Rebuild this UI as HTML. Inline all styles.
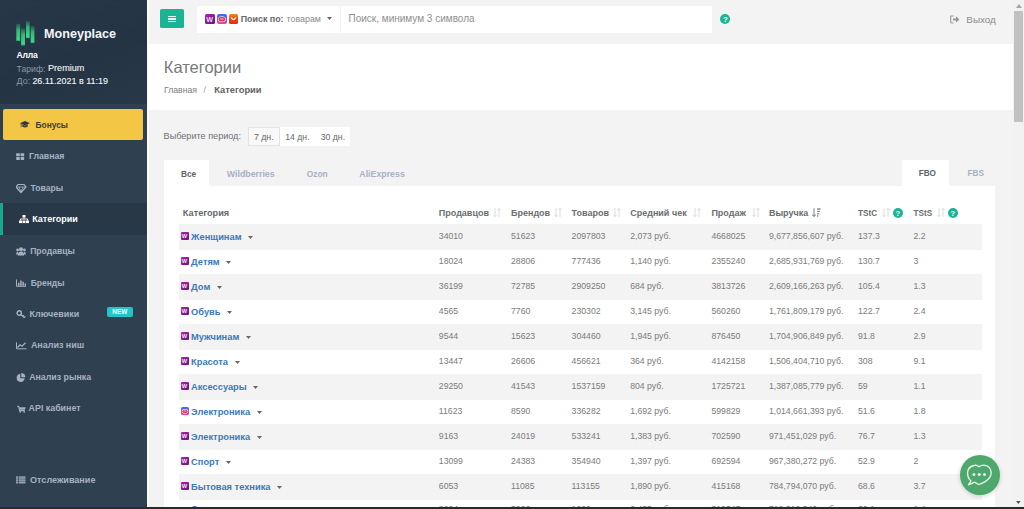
<!DOCTYPE html>
<html><head><meta charset="utf-8"><title>Категории</title>
<style>
html,body{margin:0;padding:0}
body{width:1024px;height:509px;overflow:hidden;position:relative;background:#f3f3f4;font-family:"Liberation Sans",sans-serif}
.wrap{position:absolute;left:0;top:0;width:1024px;height:509px;filter:none}
.t{position:absolute;white-space:nowrap}
.r{position:absolute}
svg.r{display:block}
</style></head><body><div class="wrap">
<div class="r" style="left:0px;top:0px;width:147px;height:509px;background:#2f4050"></div>
<div class="r" style="left:0px;top:0px;width:147px;height:104px;background:linear-gradient(160deg,#283747 0%,#253444 55%,#283849 100%)"></div>
<div class="r" style="left:147px;top:0px;width:1.5px;height:509px;background:#fafafa"></div>
<div class="r" style="left:148px;top:44px;width:865px;height:66px;background:#ffffff"></div>
<svg class="r" style="left:15px;top:20px" width="22" height="27" viewBox="0 0 22 27">
<defs><linearGradient id="lg" x1="0" y1="0" x2="0" y2="1"><stop offset="0" stop-color="#2a8a66" stop-opacity=".45"/><stop offset=".35" stop-color="#36c47e" stop-opacity=".9"/><stop offset=".9" stop-color="#3fd488"/><stop offset="1" stop-color="#2aa56a"/></linearGradient></defs>
<rect x="1.3" y="3.8" width="3.8" height="17.2" fill="url(#lg)"/>
<rect x="6.1" y="8.5" width="3.9" height="17" fill="url(#lg)"/>
<rect x="11" y="1.2" width="3.7" height="17" fill="url(#lg)"/>
<rect x="15.7" y="6.1" width="3.7" height="17" fill="url(#lg)"/>
</svg>
<div class="t" style="left:44px;top:28.13px;font-size:12.6px;line-height:12.6px;color:#f4f6f8;font-weight:700;">Moneyplace</div>
<div class="t" style="left:16.6px;top:51.32px;font-size:8.6px;line-height:8.6px;color:#ffffff;font-weight:700;letter-spacing:-0.2px">Алла</div>
<div class="t" style="left:16.6px;top:64.58px;font-size:8.65px;line-height:8.65px;color:#8a96a5;font-weight:400;">Тариф:</div>
<div class="t" style="left:48px;top:64.20px;font-size:9.1px;line-height:9.1px;color:#f4f6f8;font-weight:400;-webkit-text-stroke:0.1px #f4f6f8">Premium</div>
<div class="t" style="left:16.6px;top:76.87px;font-size:8.9px;line-height:8.9px;color:#8a96a5;font-weight:400;">До:</div>
<div class="t" style="left:32.4px;top:76.82px;font-size:8.95px;line-height:8.95px;color:#f4f6f8;font-weight:400;-webkit-text-stroke:0.1px #f4f6f8">26.11.2021 в 11:19</div>
<div class="r" style="left:3px;top:109px;width:140px;height:31px;background:#f3c646;border-radius:2px"></div>
<svg class="r" style="left:20.3px;top:121.3px" width="10" height="7.2" viewBox="0 0 10 7.2"><path d="M5 0 L10 2.2 L5 4.2 L0 2.2Z" fill="#2c3650"/><path d="M2.2 3.3 V5.6 Q5 7.6 7.8 5.6 V3.3 L5 4.6Z" fill="#4a4232"/><rect x="0.7" y="2.2" width="0.8" height="4" fill="#5a4c2c"/></svg>
<div class="t" style="left:35.5px;top:121.09px;font-size:8.4px;line-height:8.4px;color:#3d3d33;font-weight:700;">Бонусы</div>
<div class="r" style="left:0px;top:202.5px;width:147px;height:32px;background:#293846"></div>
<div class="r" style="left:0px;top:202.5px;width:3px;height:32px;background:#19aa8d"></div>
<div class="t" style="left:28.9px;top:152.39px;font-size:8.75px;line-height:8.75px;color:#a7b1c2;font-weight:700;">Главная</div>
<svg class="r" style="left:16.4px;top:152.5px;color:#a7b1c2;fill:#a7b1c2" width="11" height="10" viewBox="0 0 11 10"><rect x="0.2" y="0.2" width="3.6" height="3" rx=".4"/><rect x="4.6" y="0.2" width="3.6" height="3" rx=".4"/><rect x="0.2" y="4" width="3.6" height="3" rx=".4"/><rect x="4.6" y="4" width="3.6" height="3" rx=".4"/></svg>
<div class="t" style="left:30.5px;top:183.72px;font-size:8.6px;line-height:8.6px;color:#a7b1c2;font-weight:700;">Товары</div>
<svg class="r" style="left:16.4px;top:183.7px;color:#a7b1c2;fill:#a7b1c2" width="11" height="10" viewBox="0 0 11 10"><path d="M2 0.5 H8 L10 3 L5 8.5 L0 3Z" fill="none" stroke="currentColor" stroke-width="1.2"/><path d="M0 3 H10 M3 3 L5 8 L7 3" fill="none" stroke="currentColor" stroke-width=".8"/></svg>
<div class="t" style="left:32.2px;top:214.98px;font-size:9.0px;line-height:9.0px;color:#ffffff;font-weight:700;">Категории</div>
<svg class="r" style="left:19px;top:215.3px;color:#ffffff;fill:#ffffff" width="11" height="10" viewBox="0 0 11 10"><rect x="3.5" y="0" width="3" height="2.6"/><rect x="0" y="5.5" width="3" height="2.6"/><rect x="3.5" y="5.5" width="3" height="2.6"/><rect x="7" y="5.5" width="3" height="2.6"/><path d="M5 2.6 V4 M1.5 5.5 V4 H8.5 V5.5" stroke="currentColor" stroke-width=".9" fill="none"/></svg>
<div class="t" style="left:30.2px;top:247.02px;font-size:8.6px;line-height:8.6px;color:#a7b1c2;font-weight:700;">Продавцы</div>
<svg class="r" style="left:16.4px;top:247.0px;color:#a7b1c2;fill:#a7b1c2" width="11" height="10" viewBox="0 0 11 10"><circle cx="5" cy="2.3" r="2"/><path d="M1.8 8.5 Q1.8 4.6 5 4.6 Q8.2 4.6 8.2 8.5Z"/><circle cx="1.6" cy="3" r="1.4"/><circle cx="8.4" cy="3" r="1.4"/><path d="M0 7.5 Q0 4.8 1.8 4.8 L2.3 7.5Z M10 7.5 Q10 4.8 8.2 4.8 L7.7 7.5Z"/></svg>
<div class="t" style="left:30.7px;top:278.70px;font-size:8.5px;line-height:8.5px;color:#a7b1c2;font-weight:700;">Бренды</div>
<svg class="r" style="left:16.4px;top:278.6px;color:#a7b1c2;fill:#a7b1c2" width="11" height="10" viewBox="0 0 11 10"><path d="M0.5 0.5 V7.3 H10" stroke="currentColor" stroke-width="1" fill="none"/><rect x="2" y="3.8" width="1.5" height="3"/><rect x="4.2" y="1.5" width="1.5" height="5.3"/><rect x="6.4" y="2.8" width="1.5" height="4"/><rect x="8.6" y="4.5" width="1.4" height="2.3"/></svg>
<div class="t" style="left:29.6px;top:309.62px;font-size:8.95px;line-height:8.95px;color:#a7b1c2;font-weight:700;">Ключевики</div>
<svg class="r" style="left:16.4px;top:309.9px;color:#a7b1c2;fill:#a7b1c2" width="11" height="10" viewBox="0 0 11 10"><circle cx="3.2" cy="3" r="2.2" fill="none" stroke="currentColor" stroke-width="1.4"/><path d="M4.8 4.6 L8.2 7.6 M6.8 6.4 L8 5.2 M8.2 7.6 L9.4 6.4" stroke="currentColor" stroke-width="1.3" fill="none"/></svg>
<div class="t" style="left:30.9px;top:341.22px;font-size:8.95px;line-height:8.95px;color:#a7b1c2;font-weight:700;">Анализ ниш</div>
<svg class="r" style="left:16.4px;top:341.5px;color:#a7b1c2;fill:#a7b1c2" width="11" height="10" viewBox="0 0 11 10"><path d="M0.5 0.3 V6.8 H10.5" stroke="currentColor" stroke-width="1" fill="none"/><path d="M1.5 5.5 L4 2.8 L6 4.2 L9.5 0.8" stroke="currentColor" stroke-width="1.2" fill="none"/></svg>
<div class="t" style="left:29.2px;top:372.65px;font-size:8.8px;line-height:8.8px;color:#a7b1c2;font-weight:700;">Анализ рынка</div>
<svg class="r" style="left:16.4px;top:372.8px;color:#a7b1c2;fill:#a7b1c2" width="11" height="10" viewBox="0 0 11 10"><path d="M4.3 1 A4 4 0 1 0 8.6 5.3 H4.3Z"/><path d="M5.3 0 A4 4 0 0 1 9.3 4.2 H5.3Z"/></svg>
<div class="t" style="left:28.6px;top:404.01px;font-size:8.85px;line-height:8.85px;color:#a7b1c2;font-weight:700;">API кабинет</div>
<svg class="r" style="left:16.4px;top:404.2px;color:#a7b1c2;fill:#a7b1c2" width="11" height="10" viewBox="0 0 11 10"><path d="M1 2.2 H2.6 L3.6 6.6 H8.8" stroke="currentColor" stroke-width="1.1" fill="none"/><path d="M3 3.2 H9.6 L9 5.8 H3.6Z"/><circle cx="4.2" cy="7.9" r=".8"/><circle cx="8.2" cy="7.9" r=".8"/></svg>
<div class="t" style="left:30px;top:475.74px;font-size:9.05px;line-height:9.05px;color:#a7b1c2;font-weight:700;">Отслеживание</div>
<svg class="r" style="left:16.4px;top:476.1px;color:#a7b1c2;fill:#a7b1c2" width="11" height="10" viewBox="0 0 11 10"><rect x="0" y="0.4" width="2" height="1.3"/><rect x="0" y="2.3" width="2" height="1.3"/><rect x="0" y="4.2" width="2" height="1.3"/><rect x="0" y="6.1" width="2" height="1.3"/><rect x="2.7" y="0.4" width="6.8" height="1.3"/><rect x="2.7" y="2.3" width="6.8" height="1.3"/><rect x="2.7" y="4.2" width="6.8" height="1.3"/><rect x="2.7" y="6.1" width="6.8" height="1.3"/></svg>
<div class="r" style="left:107px;top:306.9px;width:26.3px;height:10.4px;background:#23c6c8;border-radius:2px"></div>
<div class="t" style="left:112.3px;top:309.38px;font-size:6.4px;line-height:6.4px;color:#f2fbfb;font-weight:700;">NEW</div>
<div class="r" style="left:160px;top:9px;width:24px;height:19px;background:#1ab394;border-radius:1.5px"></div>
<div class="r" style="left:168px;top:16px;width:8px;height:1.4px;background:#e8f7f3"></div>
<div class="r" style="left:168px;top:18.4px;width:8px;height:1.4px;background:#e8f7f3"></div>
<div class="r" style="left:168px;top:20.8px;width:8px;height:1.4px;background:#e8f7f3"></div>
<div class="r" style="left:197px;top:6px;width:515px;height:27px;background:#ffffff"></div>
<div class="r" style="left:339.5px;top:6px;width:1px;height:27px;background:#f3f3f3"></div>
<div class="r" style="left:205px;top:14px;width:10px;height:10px;border-radius:1.5px;background:linear-gradient(135deg,#b41fa8,#5d1a86)"></div>
<div class="t" style="left:206.3px;top:15.71px;font-size:7.2px;line-height:7.2px;color:#f0d5f0;font-weight:700;letter-spacing:-0.4px">W</div>
<div class="r" style="left:217px;top:14px;width:9.5px;height:10px;border-radius:2px;background:linear-gradient(180deg,#3f6af5 0%,#6a5fe0 45%,#f2457e 100%)"></div>
<svg class="r" style="left:217px;top:14px" width="10" height="10" viewBox="0 0 10 10"><ellipse cx="4.9" cy="5.2" rx="3.9" ry="3" fill="#fff"/><ellipse cx="4.9" cy="5.2" rx="3.3" ry="2.4" fill="#ef2e62"/><ellipse cx="4.9" cy="4.8" rx="2" ry=".9" fill="#ff8fae"/></svg>
<div class="r" style="left:229px;top:14px;width:9px;height:9.6px;border-radius:1.5px;background:linear-gradient(180deg,#f58a1f 0%,#ea4a10 45%,#e2300c 100%)"></div>
<svg class="r" style="left:229px;top:14px" width="9" height="10" viewBox="0 0 9 10"><path d="M2 3.5 Q4.5 7.5 7 3.5" stroke="#fff" stroke-width="1.3" fill="none"/></svg>
<div class="t" style="left:240.7px;top:15.07px;font-size:8.9px;line-height:8.9px;color:#66696b;font-weight:700;">Поиск по:</div>
<div class="t" style="left:286.5px;top:15.07px;font-size:8.9px;line-height:8.9px;color:#8a8a8a;font-weight:400;">товарам</div>
<svg class="r" style="left:326.5px;top:17px" width="5" height="3" viewBox="0 0 5 3"><path d="M0 0H5L2.5 3Z" fill="#666"/></svg>
<div class="t" style="left:348.5px;top:14.43px;font-size:10px;line-height:10px;color:#8f8f8f;font-weight:400;">Поиск, минимум 3 символа</div>
<div class="r" style="left:720px;top:14px;width:10px;height:10px;border-radius:50%;background:#1ab394"></div>
<div class="t" style="left:723px;top:15.53px;font-size:8px;line-height:8px;color:#ffffff;font-weight:700;">?</div>
<svg class="r" style="left:949.5px;top:15px" width="10" height="9" viewBox="0 0 10 9"><path d="M3.5 1 H1.5 Q0.7 1 0.7 1.8 V7.2 Q0.7 8 1.5 8 H3.5" stroke="#999" stroke-width="1.1" fill="none"/><path d="M3 3.4 H6 V1.3 L9.4 4.5 L6 7.7 V5.6 H3Z" fill="#999"/></svg>
<div class="t" style="left:966.3px;top:14.82px;font-size:9.9px;line-height:9.9px;color:#8c8c8c;font-weight:400;">Выход</div>
<div class="t" style="left:163.8px;top:58.73px;font-size:16.5px;line-height:16.5px;color:#78797b;font-weight:400;">Категории</div>
<div class="t" style="left:164px;top:85.74px;font-size:8.7px;line-height:8.7px;color:#7b7e80;font-weight:400;">Главная</div>
<div class="t" style="left:203.5px;top:85.74px;font-size:8.7px;line-height:8.7px;color:#999;font-weight:400;">/</div>
<div class="t" style="left:214.3px;top:86.33px;font-size:9.3px;line-height:9.3px;color:#5f6264;font-weight:700;">Категории</div>
<div class="t" style="left:163.6px;top:131.80px;font-size:9.1px;line-height:9.1px;color:#6f7274;font-weight:400;">Выберите период:</div>
<div class="r" style="left:248.3px;top:127.2px;width:31.4px;height:18.5px;background:#f9f9f9;box-shadow:inset 0 0 0 1px #e3e3e3"></div>
<div class="r" style="left:279.7px;top:127.4px;width:70px;height:18.2px;background:#ffffff"></div>
<div class="t" style="left:253.9px;top:132.75px;font-size:8.8px;line-height:8.8px;color:#686868;font-weight:400;">7 дн.</div>
<div class="t" style="left:285.2px;top:132.84px;font-size:8.7px;line-height:8.7px;color:#686868;font-weight:400;">14 дн.</div>
<div class="t" style="left:320.7px;top:132.84px;font-size:8.7px;line-height:8.7px;color:#686868;font-weight:400;">30 дн.</div>
<div class="r" style="left:163.6px;top:160px;width:45.7px;height:30px;background:#ffffff"></div>
<div class="t" style="left:181px;top:170.17px;font-size:8.3px;line-height:8.3px;color:#606367;font-weight:700;">Все</div>
<div class="t" style="left:226.8px;top:170.05px;font-size:8.8px;line-height:8.8px;color:#a7b1c2;font-weight:700;">Wildberries</div>
<div class="t" style="left:306.8px;top:170.39px;font-size:8.4px;line-height:8.4px;color:#a7b1c2;font-weight:700;">Ozon</div>
<div class="t" style="left:359.3px;top:170.05px;font-size:8.8px;line-height:8.8px;color:#a7b1c2;font-weight:700;">AliExpress</div>
<div class="r" style="left:902px;top:160px;width:47px;height:30px;background:#ffffff"></div>
<div class="t" style="left:918.7px;top:169.76px;font-size:8.2px;line-height:8.2px;color:#606367;font-weight:700;">FBO</div>
<div class="t" style="left:967.5px;top:169.76px;font-size:8.2px;line-height:8.2px;color:#a7b1c2;font-weight:700;">FBS</div>
<div class="r" style="left:163.8px;top:186px;width:831px;height:323px;background:#ffffff"></div>
<div class="t" style="left:182.8px;top:208.81px;font-size:9.2px;line-height:9.2px;color:#676a6c;font-weight:700;">Категория</div>
<div class="t" style="left:438.8px;top:208.98px;font-size:9.0px;line-height:9.0px;color:#6a6d6f;font-weight:700;">Продавцов</div>
<svg class="r" style="left:493.2px;top:208px" width="8" height="9" viewBox="0 0 8 9"><path d="M2 0 V8.5 M0.3 6.8 L2 8.7 L3.7 6.8" stroke="#dcdcdc" stroke-width="1" fill="none"/><path d="M6 9 V0.5 M4.3 2.2 L6 0.3 L7.7 2.2" stroke="#dcdcdc" stroke-width="1" fill="none"/></svg>
<div class="t" style="left:511px;top:208.98px;font-size:9.0px;line-height:9.0px;color:#6a6d6f;font-weight:700;">Брендов</div>
<svg class="r" style="left:554.1px;top:208px" width="8" height="9" viewBox="0 0 8 9"><path d="M2 0 V8.5 M0.3 6.8 L2 8.7 L3.7 6.8" stroke="#dcdcdc" stroke-width="1" fill="none"/><path d="M6 9 V0.5 M4.3 2.2 L6 0.3 L7.7 2.2" stroke="#dcdcdc" stroke-width="1" fill="none"/></svg>
<div class="t" style="left:571.6px;top:208.98px;font-size:9.0px;line-height:9.0px;color:#6a6d6f;font-weight:700;">Товаров</div>
<svg class="r" style="left:612.7px;top:208px" width="8" height="9" viewBox="0 0 8 9"><path d="M2 0 V8.5 M0.3 6.8 L2 8.7 L3.7 6.8" stroke="#dcdcdc" stroke-width="1" fill="none"/><path d="M6 9 V0.5 M4.3 2.2 L6 0.3 L7.7 2.2" stroke="#dcdcdc" stroke-width="1" fill="none"/></svg>
<div class="t" style="left:630.2px;top:208.98px;font-size:9.0px;line-height:9.0px;color:#6a6d6f;font-weight:700;">Средний чек</div>
<svg class="r" style="left:693.0px;top:208px" width="8" height="9" viewBox="0 0 8 9"><path d="M2 0 V8.5 M0.3 6.8 L2 8.7 L3.7 6.8" stroke="#dcdcdc" stroke-width="1" fill="none"/><path d="M6 9 V0.5 M4.3 2.2 L6 0.3 L7.7 2.2" stroke="#dcdcdc" stroke-width="1" fill="none"/></svg>
<div class="t" style="left:711.4px;top:208.98px;font-size:9.0px;line-height:9.0px;color:#6a6d6f;font-weight:700;">Продаж</div>
<svg class="r" style="left:751.6px;top:208px" width="8" height="9" viewBox="0 0 8 9"><path d="M2 0 V8.5 M0.3 6.8 L2 8.7 L3.7 6.8" stroke="#dcdcdc" stroke-width="1" fill="none"/><path d="M6 9 V0.5 M4.3 2.2 L6 0.3 L7.7 2.2" stroke="#dcdcdc" stroke-width="1" fill="none"/></svg>
<div class="t" style="left:768.9px;top:208.98px;font-size:9.0px;line-height:9.0px;color:#6a6d6f;font-weight:700;">Выручка</div>
<svg class="r" style="left:811.5px;top:207.8px" width="9" height="9" viewBox="0 0 9 9"><path d="M2 0.3 V8.3 M0.4 6.6 L2 8.5 L3.6 6.6" stroke="#909090" stroke-width="1.1" fill="none"/><path d="M5 1 H8.6 M5 3.4 H8 M5 5.8 H7.3 M5 8 H6.3" stroke="#8c8c8c" stroke-width="1.3" fill="none"/></svg>
<div class="t" style="left:858px;top:209.66px;font-size:8.2px;line-height:8.2px;color:#6a6d6f;font-weight:700;">TStC</div>
<svg class="r" style="left:881.5px;top:208px" width="8" height="9" viewBox="0 0 8 9"><path d="M2 0 V8.5 M0.3 6.8 L2 8.7 L3.7 6.8" stroke="#dcdcdc" stroke-width="1" fill="none"/><path d="M6 9 V0.5 M4.3 2.2 L6 0.3 L7.7 2.2" stroke="#dcdcdc" stroke-width="1" fill="none"/></svg>
<div class="r" style="left:892.5px;top:208px;width:10px;height:10px;border-radius:50%;background:#1ab394"></div>
<div class="t" style="left:895.4px;top:209.77px;font-size:7.6px;line-height:7.6px;color:#ffffff;font-weight:700;">?</div>
<div class="t" style="left:913.5px;top:209.66px;font-size:8.2px;line-height:8.2px;color:#6a6d6f;font-weight:700;">TStS</div>
<svg class="r" style="left:936.5px;top:208px" width="8" height="9" viewBox="0 0 8 9"><path d="M2 0 V8.5 M0.3 6.8 L2 8.7 L3.7 6.8" stroke="#dcdcdc" stroke-width="1" fill="none"/><path d="M6 9 V0.5 M4.3 2.2 L6 0.3 L7.7 2.2" stroke="#dcdcdc" stroke-width="1" fill="none"/></svg>
<div class="r" style="left:947.5px;top:208px;width:10px;height:10px;border-radius:50%;background:#1ab394"></div>
<div class="t" style="left:950.4px;top:209.77px;font-size:7.6px;line-height:7.6px;color:#ffffff;font-weight:700;">?</div>
<div class="r" style="left:178.5px;top:224px;width:803.7px;height:26px;background:#f3f3f3"></div>
<div class="r" style="left:181px;top:231.9px;width:7.6px;height:8.4px;border-radius:1px;background:linear-gradient(135deg,#b51fa6,#5e1985)"></div>
<div class="t" style="left:181.7px;top:233.86px;font-size:5.6px;line-height:5.6px;color:#f3e6f3;font-weight:700;letter-spacing:-0.4px">W</div>
<div class="t" style="left:191.1px;top:233.13px;font-size:9.3px;line-height:9.3px;color:#3d7ab8;font-weight:700;">Женщинам</div>
<svg class="r" style="left:248.0px;top:235.5px" width="5" height="3" viewBox="0 0 5 3"><path d="M0 0H5L2.5 3Z" fill="#666"/></svg>
<div class="t" style="left:438.8px;top:232.24px;font-size:8.7px;line-height:8.7px;color:#7b7b7b;font-weight:400;">34010</div>
<div class="t" style="left:511px;top:232.24px;font-size:8.7px;line-height:8.7px;color:#7b7b7b;font-weight:400;">51623</div>
<div class="t" style="left:571.6px;top:232.24px;font-size:8.7px;line-height:8.7px;color:#7b7b7b;font-weight:400;">2097803</div>
<div class="t" style="left:630.2px;top:232.24px;font-size:8.7px;line-height:8.7px;color:#7b7b7b;font-weight:400;">2,073 руб.</div>
<div class="t" style="left:711.4px;top:232.24px;font-size:8.7px;line-height:8.7px;color:#7b7b7b;font-weight:400;">4668025</div>
<div class="t" style="left:768.9px;top:232.24px;font-size:8.7px;line-height:8.7px;color:#7b7b7b;font-weight:400;">9,677,856,607 руб.</div>
<div class="t" style="left:858px;top:232.24px;font-size:8.7px;line-height:8.7px;color:#7b7b7b;font-weight:400;">137.3</div>
<div class="t" style="left:913.5px;top:232.24px;font-size:8.7px;line-height:8.7px;color:#7b7b7b;font-weight:400;">2.2</div>
<div class="r" style="left:181px;top:256.9px;width:7.6px;height:8.4px;border-radius:1px;background:linear-gradient(135deg,#b51fa6,#5e1985)"></div>
<div class="t" style="left:181.7px;top:258.86px;font-size:5.6px;line-height:5.6px;color:#f3e6f3;font-weight:700;letter-spacing:-0.4px">W</div>
<div class="t" style="left:191.1px;top:258.13px;font-size:9.3px;line-height:9.3px;color:#3d7ab8;font-weight:700;">Детям</div>
<svg class="r" style="left:226.2px;top:260.5px" width="5" height="3" viewBox="0 0 5 3"><path d="M0 0H5L2.5 3Z" fill="#666"/></svg>
<div class="t" style="left:438.8px;top:257.24px;font-size:8.7px;line-height:8.7px;color:#7b7b7b;font-weight:400;">18024</div>
<div class="t" style="left:511px;top:257.24px;font-size:8.7px;line-height:8.7px;color:#7b7b7b;font-weight:400;">28806</div>
<div class="t" style="left:571.6px;top:257.24px;font-size:8.7px;line-height:8.7px;color:#7b7b7b;font-weight:400;">777436</div>
<div class="t" style="left:630.2px;top:257.24px;font-size:8.7px;line-height:8.7px;color:#7b7b7b;font-weight:400;">1,140 руб.</div>
<div class="t" style="left:711.4px;top:257.24px;font-size:8.7px;line-height:8.7px;color:#7b7b7b;font-weight:400;">2355240</div>
<div class="t" style="left:768.9px;top:257.24px;font-size:8.7px;line-height:8.7px;color:#7b7b7b;font-weight:400;">2,685,931,769 руб.</div>
<div class="t" style="left:858px;top:257.24px;font-size:8.7px;line-height:8.7px;color:#7b7b7b;font-weight:400;">130.7</div>
<div class="t" style="left:913.5px;top:257.24px;font-size:8.7px;line-height:8.7px;color:#7b7b7b;font-weight:400;">3</div>
<div class="r" style="left:178.5px;top:274px;width:803.7px;height:26px;background:#f3f3f3"></div>
<div class="r" style="left:181px;top:281.9px;width:7.6px;height:8.4px;border-radius:1px;background:linear-gradient(135deg,#b51fa6,#5e1985)"></div>
<div class="t" style="left:181.7px;top:283.86px;font-size:5.6px;line-height:5.6px;color:#f3e6f3;font-weight:700;letter-spacing:-0.4px">W</div>
<div class="t" style="left:191.1px;top:283.13px;font-size:9.3px;line-height:9.3px;color:#3d7ab8;font-weight:700;">Дом</div>
<svg class="r" style="left:216.8px;top:285.5px" width="5" height="3" viewBox="0 0 5 3"><path d="M0 0H5L2.5 3Z" fill="#666"/></svg>
<div class="t" style="left:438.8px;top:282.24px;font-size:8.7px;line-height:8.7px;color:#7b7b7b;font-weight:400;">36199</div>
<div class="t" style="left:511px;top:282.24px;font-size:8.7px;line-height:8.7px;color:#7b7b7b;font-weight:400;">72785</div>
<div class="t" style="left:571.6px;top:282.24px;font-size:8.7px;line-height:8.7px;color:#7b7b7b;font-weight:400;">2909250</div>
<div class="t" style="left:630.2px;top:282.24px;font-size:8.7px;line-height:8.7px;color:#7b7b7b;font-weight:400;">684 руб.</div>
<div class="t" style="left:711.4px;top:282.24px;font-size:8.7px;line-height:8.7px;color:#7b7b7b;font-weight:400;">3813726</div>
<div class="t" style="left:768.9px;top:282.24px;font-size:8.7px;line-height:8.7px;color:#7b7b7b;font-weight:400;">2,609,166,263 руб.</div>
<div class="t" style="left:858px;top:282.24px;font-size:8.7px;line-height:8.7px;color:#7b7b7b;font-weight:400;">105.4</div>
<div class="t" style="left:913.5px;top:282.24px;font-size:8.7px;line-height:8.7px;color:#7b7b7b;font-weight:400;">1.3</div>
<div class="r" style="left:181px;top:306.9px;width:7.6px;height:8.4px;border-radius:1px;background:linear-gradient(135deg,#b51fa6,#5e1985)"></div>
<div class="t" style="left:181.7px;top:308.86px;font-size:5.6px;line-height:5.6px;color:#f3e6f3;font-weight:700;letter-spacing:-0.4px">W</div>
<div class="t" style="left:191.1px;top:308.13px;font-size:9.3px;line-height:9.3px;color:#3d7ab8;font-weight:700;">Обувь</div>
<svg class="r" style="left:227.1px;top:310.5px" width="5" height="3" viewBox="0 0 5 3"><path d="M0 0H5L2.5 3Z" fill="#666"/></svg>
<div class="t" style="left:438.8px;top:307.24px;font-size:8.7px;line-height:8.7px;color:#7b7b7b;font-weight:400;">4565</div>
<div class="t" style="left:511px;top:307.24px;font-size:8.7px;line-height:8.7px;color:#7b7b7b;font-weight:400;">7760</div>
<div class="t" style="left:571.6px;top:307.24px;font-size:8.7px;line-height:8.7px;color:#7b7b7b;font-weight:400;">230302</div>
<div class="t" style="left:630.2px;top:307.24px;font-size:8.7px;line-height:8.7px;color:#7b7b7b;font-weight:400;">3,145 руб.</div>
<div class="t" style="left:711.4px;top:307.24px;font-size:8.7px;line-height:8.7px;color:#7b7b7b;font-weight:400;">560260</div>
<div class="t" style="left:768.9px;top:307.24px;font-size:8.7px;line-height:8.7px;color:#7b7b7b;font-weight:400;">1,761,809,179 руб.</div>
<div class="t" style="left:858px;top:307.24px;font-size:8.7px;line-height:8.7px;color:#7b7b7b;font-weight:400;">122.7</div>
<div class="t" style="left:913.5px;top:307.24px;font-size:8.7px;line-height:8.7px;color:#7b7b7b;font-weight:400;">2.4</div>
<div class="r" style="left:178.5px;top:324px;width:803.7px;height:26px;background:#f3f3f3"></div>
<div class="r" style="left:181px;top:331.9px;width:7.6px;height:8.4px;border-radius:1px;background:linear-gradient(135deg,#b51fa6,#5e1985)"></div>
<div class="t" style="left:181.7px;top:333.86px;font-size:5.6px;line-height:5.6px;color:#f3e6f3;font-weight:700;letter-spacing:-0.4px">W</div>
<div class="t" style="left:191.1px;top:333.13px;font-size:9.3px;line-height:9.3px;color:#3d7ab8;font-weight:700;">Мужчинам</div>
<svg class="r" style="left:245.8px;top:335.5px" width="5" height="3" viewBox="0 0 5 3"><path d="M0 0H5L2.5 3Z" fill="#666"/></svg>
<div class="t" style="left:438.8px;top:332.24px;font-size:8.7px;line-height:8.7px;color:#7b7b7b;font-weight:400;">9544</div>
<div class="t" style="left:511px;top:332.24px;font-size:8.7px;line-height:8.7px;color:#7b7b7b;font-weight:400;">15623</div>
<div class="t" style="left:571.6px;top:332.24px;font-size:8.7px;line-height:8.7px;color:#7b7b7b;font-weight:400;">304460</div>
<div class="t" style="left:630.2px;top:332.24px;font-size:8.7px;line-height:8.7px;color:#7b7b7b;font-weight:400;">1,945 руб.</div>
<div class="t" style="left:711.4px;top:332.24px;font-size:8.7px;line-height:8.7px;color:#7b7b7b;font-weight:400;">876450</div>
<div class="t" style="left:768.9px;top:332.24px;font-size:8.7px;line-height:8.7px;color:#7b7b7b;font-weight:400;">1,704,906,849 руб.</div>
<div class="t" style="left:858px;top:332.24px;font-size:8.7px;line-height:8.7px;color:#7b7b7b;font-weight:400;">91.8</div>
<div class="t" style="left:913.5px;top:332.24px;font-size:8.7px;line-height:8.7px;color:#7b7b7b;font-weight:400;">2.9</div>
<div class="r" style="left:181px;top:356.9px;width:7.6px;height:8.4px;border-radius:1px;background:linear-gradient(135deg,#b51fa6,#5e1985)"></div>
<div class="t" style="left:181.7px;top:358.86px;font-size:5.6px;line-height:5.6px;color:#f3e6f3;font-weight:700;letter-spacing:-0.4px">W</div>
<div class="t" style="left:191.1px;top:358.13px;font-size:9.3px;line-height:9.3px;color:#3d7ab8;font-weight:700;">Красота</div>
<svg class="r" style="left:234.5px;top:360.5px" width="5" height="3" viewBox="0 0 5 3"><path d="M0 0H5L2.5 3Z" fill="#666"/></svg>
<div class="t" style="left:438.8px;top:357.24px;font-size:8.7px;line-height:8.7px;color:#7b7b7b;font-weight:400;">13447</div>
<div class="t" style="left:511px;top:357.24px;font-size:8.7px;line-height:8.7px;color:#7b7b7b;font-weight:400;">26606</div>
<div class="t" style="left:571.6px;top:357.24px;font-size:8.7px;line-height:8.7px;color:#7b7b7b;font-weight:400;">456621</div>
<div class="t" style="left:630.2px;top:357.24px;font-size:8.7px;line-height:8.7px;color:#7b7b7b;font-weight:400;">364 руб.</div>
<div class="t" style="left:711.4px;top:357.24px;font-size:8.7px;line-height:8.7px;color:#7b7b7b;font-weight:400;">4142158</div>
<div class="t" style="left:768.9px;top:357.24px;font-size:8.7px;line-height:8.7px;color:#7b7b7b;font-weight:400;">1,506,404,710 руб.</div>
<div class="t" style="left:858px;top:357.24px;font-size:8.7px;line-height:8.7px;color:#7b7b7b;font-weight:400;">308</div>
<div class="t" style="left:913.5px;top:357.24px;font-size:8.7px;line-height:8.7px;color:#7b7b7b;font-weight:400;">9.1</div>
<div class="r" style="left:178.5px;top:374px;width:803.7px;height:26px;background:#f3f3f3"></div>
<div class="r" style="left:181px;top:381.9px;width:7.6px;height:8.4px;border-radius:1px;background:linear-gradient(135deg,#b51fa6,#5e1985)"></div>
<div class="t" style="left:181.7px;top:383.86px;font-size:5.6px;line-height:5.6px;color:#f3e6f3;font-weight:700;letter-spacing:-0.4px">W</div>
<div class="t" style="left:191.1px;top:383.13px;font-size:9.3px;line-height:9.3px;color:#3d7ab8;font-weight:700;">Аксессуары</div>
<svg class="r" style="left:253.3px;top:385.5px" width="5" height="3" viewBox="0 0 5 3"><path d="M0 0H5L2.5 3Z" fill="#666"/></svg>
<div class="t" style="left:438.8px;top:382.24px;font-size:8.7px;line-height:8.7px;color:#7b7b7b;font-weight:400;">29250</div>
<div class="t" style="left:511px;top:382.24px;font-size:8.7px;line-height:8.7px;color:#7b7b7b;font-weight:400;">41543</div>
<div class="t" style="left:571.6px;top:382.24px;font-size:8.7px;line-height:8.7px;color:#7b7b7b;font-weight:400;">1537159</div>
<div class="t" style="left:630.2px;top:382.24px;font-size:8.7px;line-height:8.7px;color:#7b7b7b;font-weight:400;">804 руб.</div>
<div class="t" style="left:711.4px;top:382.24px;font-size:8.7px;line-height:8.7px;color:#7b7b7b;font-weight:400;">1725721</div>
<div class="t" style="left:768.9px;top:382.24px;font-size:8.7px;line-height:8.7px;color:#7b7b7b;font-weight:400;">1,387,085,779 руб.</div>
<div class="t" style="left:858px;top:382.24px;font-size:8.7px;line-height:8.7px;color:#7b7b7b;font-weight:400;">59</div>
<div class="t" style="left:913.5px;top:382.24px;font-size:8.7px;line-height:8.7px;color:#7b7b7b;font-weight:400;">1.1</div>
<div class="r" style="left:181px;top:406.9px;width:8px;height:8.2px;border-radius:1.5px;background:linear-gradient(180deg,#3f6af5 0%,#6a5fe0 45%,#f2457e 100%)"></div>
<svg class="r" style="left:181px;top:406.9px" width="8" height="8.2" viewBox="0 0 10 10"><ellipse cx="5" cy="5.3" rx="3.9" ry="3" fill="#fff"/><ellipse cx="5" cy="5.3" rx="3.3" ry="2.4" fill="#ef2e62"/><ellipse cx="5" cy="4.9" rx="2" ry=".9" fill="#ff8fae"/></svg>
<div class="t" style="left:191.1px;top:408.13px;font-size:9.3px;line-height:9.3px;color:#3d7ab8;font-weight:700;">Электроника</div>
<svg class="r" style="left:256.7px;top:410.5px" width="5" height="3" viewBox="0 0 5 3"><path d="M0 0H5L2.5 3Z" fill="#666"/></svg>
<div class="t" style="left:438.8px;top:407.24px;font-size:8.7px;line-height:8.7px;color:#7b7b7b;font-weight:400;">11623</div>
<div class="t" style="left:511px;top:407.24px;font-size:8.7px;line-height:8.7px;color:#7b7b7b;font-weight:400;">8590</div>
<div class="t" style="left:571.6px;top:407.24px;font-size:8.7px;line-height:8.7px;color:#7b7b7b;font-weight:400;">336282</div>
<div class="t" style="left:630.2px;top:407.24px;font-size:8.7px;line-height:8.7px;color:#7b7b7b;font-weight:400;">1,692 руб.</div>
<div class="t" style="left:711.4px;top:407.24px;font-size:8.7px;line-height:8.7px;color:#7b7b7b;font-weight:400;">599829</div>
<div class="t" style="left:768.9px;top:407.24px;font-size:8.7px;line-height:8.7px;color:#7b7b7b;font-weight:400;">1,014,661,393 руб.</div>
<div class="t" style="left:858px;top:407.24px;font-size:8.7px;line-height:8.7px;color:#7b7b7b;font-weight:400;">51.6</div>
<div class="t" style="left:913.5px;top:407.24px;font-size:8.7px;line-height:8.7px;color:#7b7b7b;font-weight:400;">1.8</div>
<div class="r" style="left:178.5px;top:424px;width:803.7px;height:26px;background:#f3f3f3"></div>
<div class="r" style="left:181px;top:431.9px;width:7.6px;height:8.4px;border-radius:1px;background:linear-gradient(135deg,#b51fa6,#5e1985)"></div>
<div class="t" style="left:181.7px;top:433.86px;font-size:5.6px;line-height:5.6px;color:#f3e6f3;font-weight:700;letter-spacing:-0.4px">W</div>
<div class="t" style="left:191.1px;top:433.13px;font-size:9.3px;line-height:9.3px;color:#3d7ab8;font-weight:700;">Электроника</div>
<svg class="r" style="left:256.7px;top:435.5px" width="5" height="3" viewBox="0 0 5 3"><path d="M0 0H5L2.5 3Z" fill="#666"/></svg>
<div class="t" style="left:438.8px;top:432.24px;font-size:8.7px;line-height:8.7px;color:#7b7b7b;font-weight:400;">9163</div>
<div class="t" style="left:511px;top:432.24px;font-size:8.7px;line-height:8.7px;color:#7b7b7b;font-weight:400;">24019</div>
<div class="t" style="left:571.6px;top:432.24px;font-size:8.7px;line-height:8.7px;color:#7b7b7b;font-weight:400;">533241</div>
<div class="t" style="left:630.2px;top:432.24px;font-size:8.7px;line-height:8.7px;color:#7b7b7b;font-weight:400;">1,383 руб.</div>
<div class="t" style="left:711.4px;top:432.24px;font-size:8.7px;line-height:8.7px;color:#7b7b7b;font-weight:400;">702590</div>
<div class="t" style="left:768.9px;top:432.24px;font-size:8.7px;line-height:8.7px;color:#7b7b7b;font-weight:400;">971,451,029 руб.</div>
<div class="t" style="left:858px;top:432.24px;font-size:8.7px;line-height:8.7px;color:#7b7b7b;font-weight:400;">76.7</div>
<div class="t" style="left:913.5px;top:432.24px;font-size:8.7px;line-height:8.7px;color:#7b7b7b;font-weight:400;">1.3</div>
<div class="r" style="left:181px;top:456.9px;width:7.6px;height:8.4px;border-radius:1px;background:linear-gradient(135deg,#b51fa6,#5e1985)"></div>
<div class="t" style="left:181.7px;top:458.86px;font-size:5.6px;line-height:5.6px;color:#f3e6f3;font-weight:700;letter-spacing:-0.4px">W</div>
<div class="t" style="left:191.1px;top:458.13px;font-size:9.3px;line-height:9.3px;color:#3d7ab8;font-weight:700;">Спорт</div>
<svg class="r" style="left:225.7px;top:460.5px" width="5" height="3" viewBox="0 0 5 3"><path d="M0 0H5L2.5 3Z" fill="#666"/></svg>
<div class="t" style="left:438.8px;top:457.24px;font-size:8.7px;line-height:8.7px;color:#7b7b7b;font-weight:400;">13099</div>
<div class="t" style="left:511px;top:457.24px;font-size:8.7px;line-height:8.7px;color:#7b7b7b;font-weight:400;">24383</div>
<div class="t" style="left:571.6px;top:457.24px;font-size:8.7px;line-height:8.7px;color:#7b7b7b;font-weight:400;">354940</div>
<div class="t" style="left:630.2px;top:457.24px;font-size:8.7px;line-height:8.7px;color:#7b7b7b;font-weight:400;">1,397 руб.</div>
<div class="t" style="left:711.4px;top:457.24px;font-size:8.7px;line-height:8.7px;color:#7b7b7b;font-weight:400;">692594</div>
<div class="t" style="left:768.9px;top:457.24px;font-size:8.7px;line-height:8.7px;color:#7b7b7b;font-weight:400;">967,380,272 руб.</div>
<div class="t" style="left:858px;top:457.24px;font-size:8.7px;line-height:8.7px;color:#7b7b7b;font-weight:400;">52.9</div>
<div class="t" style="left:913.5px;top:457.24px;font-size:8.7px;line-height:8.7px;color:#7b7b7b;font-weight:400;">2</div>
<div class="r" style="left:178.5px;top:474px;width:803.7px;height:26px;background:#f3f3f3"></div>
<div class="r" style="left:181px;top:481.9px;width:7.6px;height:8.4px;border-radius:1px;background:linear-gradient(135deg,#b51fa6,#5e1985)"></div>
<div class="t" style="left:181.7px;top:483.86px;font-size:5.6px;line-height:5.6px;color:#f3e6f3;font-weight:700;letter-spacing:-0.4px">W</div>
<div class="t" style="left:191.1px;top:483.13px;font-size:9.3px;line-height:9.3px;color:#3d7ab8;font-weight:700;">Бытовая техника</div>
<svg class="r" style="left:277.1px;top:485.5px" width="5" height="3" viewBox="0 0 5 3"><path d="M0 0H5L2.5 3Z" fill="#666"/></svg>
<div class="t" style="left:438.8px;top:482.24px;font-size:8.7px;line-height:8.7px;color:#7b7b7b;font-weight:400;">6053</div>
<div class="t" style="left:511px;top:482.24px;font-size:8.7px;line-height:8.7px;color:#7b7b7b;font-weight:400;">11085</div>
<div class="t" style="left:571.6px;top:482.24px;font-size:8.7px;line-height:8.7px;color:#7b7b7b;font-weight:400;">113155</div>
<div class="t" style="left:630.2px;top:482.24px;font-size:8.7px;line-height:8.7px;color:#7b7b7b;font-weight:400;">1,890 руб.</div>
<div class="t" style="left:711.4px;top:482.24px;font-size:8.7px;line-height:8.7px;color:#7b7b7b;font-weight:400;">415168</div>
<div class="t" style="left:768.9px;top:482.24px;font-size:8.7px;line-height:8.7px;color:#7b7b7b;font-weight:400;">784,794,070 руб.</div>
<div class="t" style="left:858px;top:482.24px;font-size:8.7px;line-height:8.7px;color:#7b7b7b;font-weight:400;">68.6</div>
<div class="t" style="left:913.5px;top:482.24px;font-size:8.7px;line-height:8.7px;color:#7b7b7b;font-weight:400;">3.7</div>
<div class="r" style="left:181px;top:506.9px;width:8px;height:8.2px;border-radius:1.5px;background:linear-gradient(180deg,#3f6af5 0%,#6a5fe0 45%,#f2457e 100%)"></div>
<svg class="r" style="left:181px;top:506.9px" width="8" height="8.2" viewBox="0 0 10 10"><ellipse cx="5" cy="5.3" rx="3.9" ry="3" fill="#fff"/><ellipse cx="5" cy="5.3" rx="3.3" ry="2.4" fill="#ef2e62"/><ellipse cx="5" cy="4.9" rx="2" ry=".9" fill="#ff8fae"/></svg>
<div class="t" style="left:191.1px;top:505.43px;font-size:9.3px;line-height:9.3px;color:#3d7ab8;font-weight:700;">Строительство</div>
<svg class="r" style="left:268.3px;top:510.5px" width="5" height="3" viewBox="0 0 5 3"><path d="M0 0H5L2.5 3Z" fill="#666"/></svg>
<div class="t" style="left:438.8px;top:504.54px;font-size:8.7px;line-height:8.7px;color:#7b7b7b;font-weight:400;">8204</div>
<div class="t" style="left:511px;top:504.54px;font-size:8.7px;line-height:8.7px;color:#7b7b7b;font-weight:400;">5926</div>
<div class="t" style="left:571.6px;top:504.54px;font-size:8.7px;line-height:8.7px;color:#7b7b7b;font-weight:400;">1209</div>
<div class="t" style="left:630.2px;top:504.54px;font-size:8.7px;line-height:8.7px;color:#7b7b7b;font-weight:400;">2,455 руб.</div>
<div class="t" style="left:711.4px;top:504.54px;font-size:8.7px;line-height:8.7px;color:#7b7b7b;font-weight:400;">319547</div>
<div class="t" style="left:768.9px;top:504.54px;font-size:8.7px;line-height:8.7px;color:#7b7b7b;font-weight:400;">718,310,540 руб.</div>
<div class="t" style="left:858px;top:504.54px;font-size:8.7px;line-height:8.7px;color:#7b7b7b;font-weight:400;">60.1</div>
<div class="t" style="left:913.5px;top:504.54px;font-size:8.7px;line-height:8.7px;color:#7b7b7b;font-weight:400;">1.4</div>
<div class="r" style="left:959.5px;top:455px;width:40px;height:40px;border-radius:50%;background:#4fa86b;box-shadow:0 1px 4px rgba(0,0,0,.18)"></div>
<svg class="r" style="left:959px;top:455px" width="40" height="40" viewBox="0 0 40 40"><path d="M20 11.8 C18.3 10.2 16.5 10 14.9 10.5 C11 11.4 8.6 14.5 8.6 18.2 C8.6 21.5 9.8 24 12 26 L9.4 29.8 L15.7 27.2 C17.2 28.2 18.6 29 20 29.5 C22.5 28.6 24.5 27.6 26.2 26.6 C30 24 32.2 21.2 32.2 18 C32.2 13.6 29.2 10.8 26 10.3 C23.6 10 21.6 10.6 20 11.8Z" fill="none" stroke="#eef7f0" stroke-width="1.3" stroke-linejoin="round"/><circle cx="14.9" cy="19.6" r="1.45" fill="#fff"/><circle cx="20.3" cy="19.6" r="1.45" fill="#fff"/><circle cx="25.5" cy="19.6" r="1.45" fill="#fff"/></svg>
<div class="r" style="left:1013px;top:0px;width:11px;height:509px;background:#f2f2f2"></div>
<div class="r" style="left:1014px;top:11px;width:9px;height:111px;background:#c1c1c1"></div>
<svg class="r" style="left:1015.5px;top:3.5px" width="6" height="4" viewBox="0 0 6 4"><path d="M0 4H6L3 0Z" fill="#a3a3a3"/></svg>
<svg class="r" style="left:1016.3px;top:500.8px" width="4.6" height="3" viewBox="0 0 6 4"><path d="M0 0H6L3 4Z" fill="#505050"/></svg>
<div class="r" style="left:0px;top:507px;width:1024px;height:2px;background:#2a2a2a"></div>
</div></body></html>
